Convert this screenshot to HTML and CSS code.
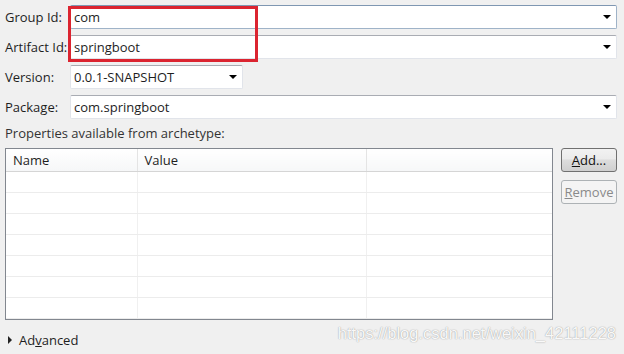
FILE: index.html
```html
<!DOCTYPE html>
<html lang="en">
<head>
  <meta charset="UTF-8">
  <title>New Maven Project</title>
  <link rel="stylesheet" href="styles.css">
</head>
<body>
  <div class="page">
    <div class="form">
      <label>Group Id:</label>
      <div class="combo focused"><span>com</span><i class="arrow"></i></div>
      <label>Artifact Id:</label>
      <div class="combo"><span>springboot</span><i class="arrow"></i></div>
      <label>Version:</label>
      <div class="combo version"><span>0.0.1-SNAPSHOT</span><i class="arrow"></i></div>
      <label>Package:</label>
      <div class="combo"><span>com.springboot</span><i class="arrow"></i></div>
    </div>

    <div class="caption">Properties available from archetype:</div>

    <div class="props">
      <div class="table-box">
        <table>
          <colgroup>
            <col class="col-name">
            <col class="col-value">
            <col>
          </colgroup>
          <thead>
            <tr><th>Name</th><th>Value</th><th></th></tr>
          </thead>
          <tbody>
            <tr><td></td><td></td><td></td></tr>
            <tr><td></td><td></td><td></td></tr>
            <tr><td></td><td></td><td></td></tr>
            <tr><td></td><td></td><td></td></tr>
            <tr><td></td><td></td><td></td></tr>
            <tr><td></td><td></td><td></td></tr>
            <tr><td></td><td></td><td></td></tr>
          </tbody>
        </table>
      </div>
      <div class="buttons">
        <button class="btn"><u>A</u>dd...</button>
        <button class="btn" disabled><u>R</u>emove</button>
      </div>
    </div>

    <div class="advanced"><i class="twisty"></i><span>Ad<u>v</u>anced</span></div>

    <!-- annotation drawn over the screenshot -->
    <div class="highlight"></div>
    <div class="watermark">https://blog.csdn.net/weixin_42111228</div>
  </div>
</body>
</html>
```
FILE: styles.css
```css
:root {
  --bg: #f0f0f0;
  --text: #1e1e1e;
  --field-border-top: #a9acb3;
  --grid-line: #ececec;
}

html, body {
  margin: 0;
  background: var(--bg);
}

body {
  font-family: 'Open Sans', 'Noto Sans', sans-serif;
  font-size: 13px;
  color: var(--text);
}

.page {
  position: relative;
  width: 624px;
  height: 354px;
  padding: 5px 7px 0 5px;
  box-sizing: border-box;
}

.form {
  display: grid;
  grid-template-columns: 65px 1fr;
  row-gap: 6px;
  align-items: center;
}

.form label {
  line-height: 24px;
}

.combo {
  height: 24px;
  box-sizing: border-box;
  background: #fff;
  border: 1px solid #e1e4ea;
  border-top-color: var(--field-border-top);
  display: flex;
  align-items: center;
  justify-content: space-between;
  padding: 0 5px 0 3px;
  border-radius: 2px;
}

.combo.focused {
  border-color: #9fb3c8;
  border-top-color: #7f97b2;
}

.combo.version {
  width: 173px;
}

.arrow {
  width: 0;
  height: 0;
  border-left: 4px solid transparent;
  border-right: 4px solid transparent;
  border-top: 4px solid #000;
}

.caption {
  margin-top: 5px;
  line-height: 18px;
  color: #333;
}

.props {
  display: flex;
  gap: 8px;
  margin-top: 6px;
}

.table-box {
  width: 548px;
  height: 172px;
  box-sizing: border-box;
  border: 1px solid #82878f;
  background: #fff;
  overflow: hidden;
}

table {
  width: 100%;
  border-collapse: collapse;
  table-layout: fixed;
}

.col-name { width: 131px; }
.col-value { width: 229px; }

th {
  height: 22px;
  padding: 0 7px;
  line-height: 16px;
  text-align: left;
  font-weight: normal;
  background: linear-gradient(#ffffff, #f6f7f8);
  border-bottom: 1px solid #d5d5d5;
  border-right: 1px solid #e4e4e4;
}

td {
  height: 20px;
  padding: 0;
  line-height: 1;
  border-bottom: 1px solid var(--grid-line);
  border-right: 1px solid #f0f0f0;
}

th:last-child, td:last-child {
  border-right: none;
}

.buttons {
  display: flex;
  flex-direction: column;
  gap: 8px;
}

.btn {
  width: 56px;
  height: 24px;
  padding: 0;
  font-family: inherit;
  font-size: 13px;
  color: #111;
  border: 1px solid #707070;
  border-radius: 3px;
  background: linear-gradient(#f2f2f2 0%, #ebebeb 45%, #dddddd 50%, #cfcfcf 100%);
}

.btn:disabled {
  color: #8a8a8a;
  border-color: #adb2b5;
  background: #f4f4f4;
}

.advanced {
  display: flex;
  align-items: center;
  gap: 7px;
  margin-top: 11px;
  padding-left: 3px;
  line-height: 18px;
}

.twisty {
  width: 0;
  height: 0;
  border-top: 4px solid transparent;
  border-bottom: 4px solid transparent;
  border-left: 4px solid #222;
}

.highlight {
  position: absolute;
  left: 68px;
  top: 6px;
  width: 190px;
  height: 56px;
  box-sizing: border-box;
  border: 3px solid #db2430;
}

.watermark {
  position: absolute;
  right: 8px;
  top: 324px;
  font-family: 'Liberation Sans', Arial, sans-serif;
  font-size: 16.5px;
  color: rgba(255, 255, 255, 0.95);
  text-shadow: 0 0 1px rgba(0, 0, 0, 0.35), 0 0 2px rgba(0, 0, 0, 0.12);
}
```
